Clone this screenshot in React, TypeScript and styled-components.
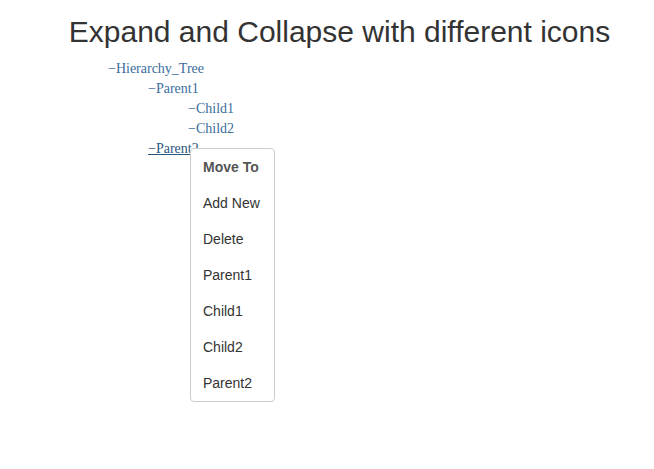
import React from "react";
import styled, { createGlobalStyle } from "styled-components";

const GlobalStyle = createGlobalStyle`
  body {
    margin: 0;
    background: #fff;
  }
`;

const Page = styled.div`
  width: 654px;
  height: 469px;
  overflow: hidden;
  font-family: "Liberation Serif", serif;
`;

const Title = styled.h1`
  margin: 0;
  padding: 14px 0 0 25px;
  text-align: center;
  font-family: "Liberation Sans", Arial, sans-serif;
  font-size: 30px;
  font-weight: 400;
  line-height: 36px;
  color: #333;
`;

const Tree = styled.ul`
  list-style: none;
  margin: 9px 0 0 108px;
  padding: 0;
`;

const Node = styled.li<{ $depth: number }>`
  position: relative;
  padding-left: ${(p) => p.$depth * 40}px;
  height: 20px;
  line-height: 20px;
  font-size: 14px;
`;

const Link = styled.a<{ $hover?: boolean }>`
  color: ${(p) => (p.$hover ? "#2a5680" : "#3a6d9c")};
  text-decoration: ${(p) => (p.$hover ? "underline" : "none")};
  cursor: pointer;
`;

const Menu = styled.ul`
  position: absolute;
  left: 82px;
  top: 9px;
  width: 83px;
  margin: 0;
  padding: 0;
  list-style: none;
  background: #fff;
  border: 1px solid #ccc;
  border-radius: 4px;
  font-family: "Liberation Sans", Arial, sans-serif;
  font-size: 14px;
  z-index: 2;
`;

const MenuItem = styled.li<{ $head?: boolean }>`
  height: 36px;
  line-height: 36px;
  padding-left: 12px;
  color: ${(p) => (p.$head ? "#555" : "#333")};
  font-weight: ${(p) => (p.$head ? 700 : 400)};
  white-space: nowrap;
`;

const nodes = [
  { label: "Hierarchy_Tree", depth: 0 },
  { label: "Parent1", depth: 1 },
  { label: "Child1", depth: 2 },
  { label: "Child2", depth: 2 },
];

const menuItems = ["Add New", "Delete", "Parent1", "Child1", "Child2", "Parent2"];

export default function App() {
  return (
    <Page>
      <GlobalStyle />
      <Title>Expand and Collapse with different icons</Title>
      <Tree>
        {nodes.map((n) => (
          <Node key={n.label} $depth={n.depth}>
            <Link>−{n.label}</Link>
          </Node>
        ))}
        <Node $depth={1}>
          <Link $hover>−Parent2</Link>
          <Menu>
            <MenuItem $head>Move To</MenuItem>
            {menuItems.map((m) => (
              <MenuItem key={m}>{m}</MenuItem>
            ))}
          </Menu>
        </Node>
      </Tree>
    </Page>
  );
}
